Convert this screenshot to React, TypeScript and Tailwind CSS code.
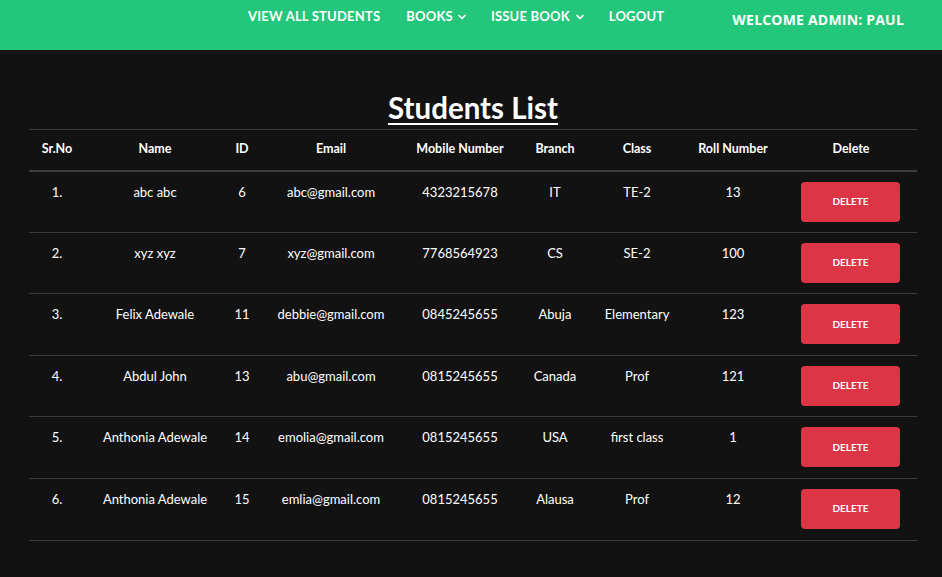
import { ChevronDown } from "lucide-react";

type Student = {
  name: string;
  id: number;
  email: string;
  mobile: string;
  branch: string;
  cls: string;
  roll: string;
};

const students: Student[] = [
  { name: "abc abc", id: 6, email: "abc@gmail.com", mobile: "4323215678", branch: "IT", cls: "TE-2", roll: "13" },
  { name: "xyz xyz", id: 7, email: "xyz@gmail.com", mobile: "7768564923", branch: "CS", cls: "SE-2", roll: "100" },
  { name: "Felix Adewale", id: 11, email: "debbie@gmail.com", mobile: "0845245655", branch: "Abuja", cls: "Elementary", roll: "123" },
  { name: "Abdul John", id: 13, email: "abu@gmail.com", mobile: "0815245655", branch: "Canada", cls: "Prof", roll: "121" },
  { name: "Anthonia Adewale", id: 14, email: "emolia@gmail.com", mobile: "0815245655", branch: "USA", cls: "first class", roll: "1" },
  { name: "Anthonia Adewale", id: 15, email: "emlia@gmail.com", mobile: "0815245655", branch: "Alausa", cls: "Prof", roll: "12" },
];

const headers = ["Sr.No", "Name", "ID", "Email", "Mobile Number", "Branch", "Class", "Roll Number", "Delete"];

export default function App() {
  return (
    <div className="min-h-[577px] bg-[#121212] text-white font-['Lato','Liberation_Sans',sans-serif]">
      <nav className="h-[50px] bg-[#22c77b] flex items-start">
        <ul className="flex items-center gap-[23px] ml-[248px] mt-[7px] text-[13px] font-bold uppercase tracking-[0.2px]">
          <li className="mr-[3px]">View All Students</li>
          <li className="flex items-center gap-[3px]">
            Books <ChevronDown className="w-[12px] h-[12px]" strokeWidth={3.5} />
          </li>
          <li className="flex items-center gap-[4px]">
            Issue Book <ChevronDown className="w-[12px] h-[12px]" strokeWidth={3.5} />
          </li>
          <li>Logout</li>
        </ul>
        <div className="ml-auto mr-[38px] mt-[9px] text-[14px] font-bold uppercase tracking-[0.2px] font-['Open_Sans',sans-serif]">
          Welcome Admin: Paul
        </div>
      </nav>

      <h1 className="ml-[4px] text-center text-[29.5px] font-bold underline underline-offset-[4px] decoration-2 mt-[38px] leading-[40px]">
        Students List
      </h1>

      <table className="ml-[29px] mt-[1px] w-[888px] table-fixed border-collapse text-[13px] text-center">
        <colgroup>
          <col className="w-[56px]" />
          <col className="w-[140px]" />
          <col className="w-[34px]" />
          <col className="w-[144px]" />
          <col className="w-[114px]" />
          <col className="w-[76px]" />
          <col className="w-[88px]" />
          <col className="w-[104px]" />
          <col className="w-[132px]" />
        </colgroup>
        <thead>
          <tr className="border-t border-[#3c3c3c] border-b-2 border-b-[#3c3c3c]">
            {headers.map((h) => (
              <th key={h} className="h-[41px] text-[12.5px] font-bold align-middle">
                {h}
              </th>
            ))}
          </tr>
        </thead>
        <tbody>
          {students.map((s, i) => (
            <tr key={i} className="border-b border-[#3c3c3c]">
              <td className="h-[61.6px] align-top pt-[11px]">{i + 1}.</td>
              <td className="align-top pt-[11px]">{s.name}</td>
              <td className="align-top pt-[11px]">{s.id}</td>
              <td className="align-top pt-[11px]">{s.email}</td>
              <td className="align-top pt-[11px]">{s.mobile}</td>
              <td className="align-top pt-[11px]">{s.branch}</td>
              <td className="align-top pt-[11px]">{s.cls}</td>
              <td className="align-top pt-[11px]">{s.roll}</td>
              <td className="align-top pt-[10px] pl-[16px] text-left">
                <button className="w-[99px] h-[40px] rounded-[4px] bg-[#dc3545] text-[10px] font-bold uppercase">
                  Delete
                </button>
              </td>
            </tr>
          ))}
        </tbody>
      </table>
    </div>
  );
}
